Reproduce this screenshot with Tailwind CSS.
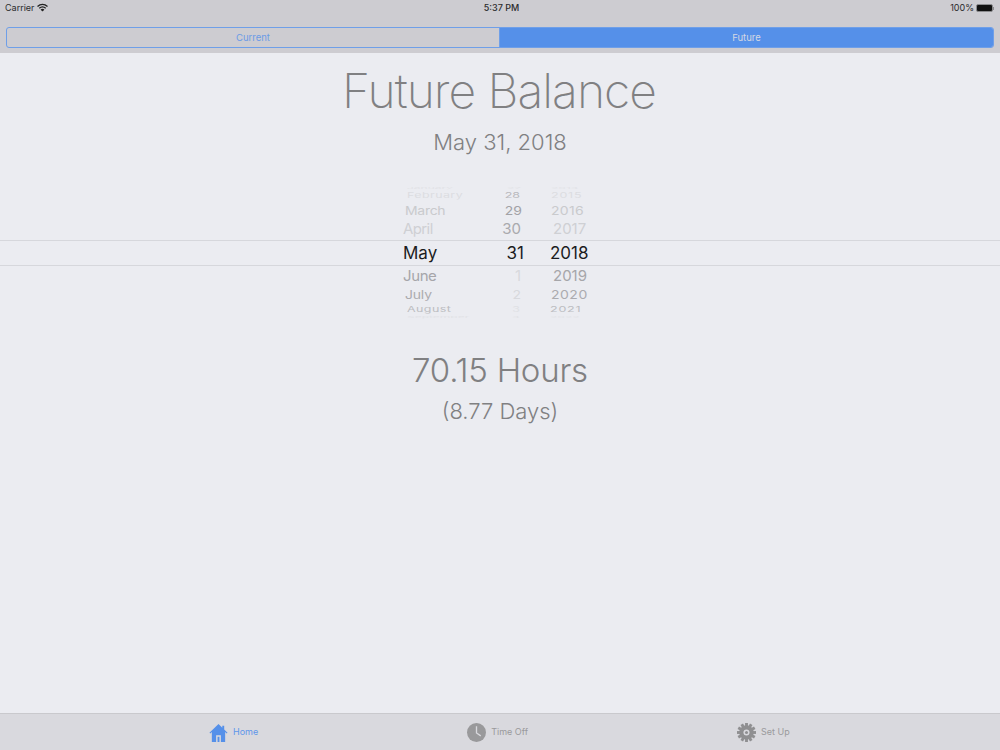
<!DOCTYPE html>
<html lang="en">
<head>
<meta charset="utf-8">
<title>Future Balance</title>
<script src="https://cdn.jsdelivr.net/npm/@tailwindcss/browser@4"></script>
</head>
<body class="font-['Inter',sans-serif]">
<div class="flex h-[750px] w-[1000px] flex-col overflow-hidden bg-[#ebecf1]">

  <!-- Status bar + segmented control -->
  <header class="h-[53px] shrink-0 bg-[#cdccd1]">
    <div class="relative flex h-[20px] items-start justify-between pl-[5px] pr-[6px] pt-[2px] text-[9px] leading-[12px] text-[#2b2b2d]">
      <div class="flex items-center gap-[2px]">
        <span>Carrier</span>
        <svg class="-mt-[2px] h-[9px] w-[11px]" viewBox="0 0 22 16" fill="none" stroke="#222" stroke-width="2.6"><path d="M1 6c6-5.500 14-5.500 20 0"/><path d="M4.500 9.500c4-3.500 9-3.500 13 0"/><path d="M8 13c2-1.600 4-1.600 6 0"/><path d="M11 16l-2.500-3h5z" fill="#222" stroke="none"/></svg>
      </div>
      <span class="absolute left-0 right-0 pl-[3px] text-center font-medium">5:37 PM</span>
      <div class="flex items-center gap-[2px]">
        <span>100%</span>
        <div class="flex items-center">
          <div class="h-[8px] w-[17px] rounded-[2px] border border-[#8b8b8e] bg-[#111]"></div>
          <div class="h-[3px] w-[1px] bg-[#8b8b8e]"></div>
        </div>
      </div>
    </div>
    <div class="mx-[6px] mt-[7px] flex h-[21px] overflow-hidden rounded-[3px] border border-[#6f9fe8] text-[9.5px] leading-[19px]">
      <div class="w-[493px] border-r border-[#6f9fe8] text-center text-[#6b9be6]">Current</div>
      <div class="flex-1 bg-[#5590e9] text-center text-[#d4d8e4]">Future</div>
    </div>
  </header>

  <main class="flex-1 text-center text-[#808082]">
    <h1 class="mt-[9px] pr-[2px] text-[48px] font-extralight leading-[58px] tracking-[-1px]">Future Balance</h1>
    <p class="mt-[6px] text-[22px] font-[350] leading-[32px]">May 31, 2018</p>

    <!-- Date picker wheel -->
    <div class="mt-[29px] text-left">
      <div class="flex h-[2px] scale-y-[.16] items-center pl-[407px] text-[12px] leading-[12px] text-[#e2e3e7]"><span class="w-[93px]">January</span><span class="w-[21px] text-right">27</span><span class="ml-[30px]">2014</span></div>
      <div class="flex h-[14px] scale-y-[.62] items-center pl-[407px] text-[12.5px] leading-[14px] text-[#dcdde1]"><span class="w-[93px] tracking-[.4px]">February</span><span class="w-[21px] pr-[1px] text-right text-[#b9b9bd]">28</span><span class="ml-[30px] tracking-[.8px]">2015</span></div>
      <div class="flex h-[15px] scale-y-[.8] items-center pl-[405px] text-[14px] leading-[16px] text-[#c9cacd]"><span class="w-[95px] tracking-[-.3px]">March</span><span class="w-[22px] text-right text-[#a2a2a6]">29</span><span class="ml-[29px] tracking-[.3px]">2016</span></div>
      <div class="flex h-[22px] scale-y-[.95] items-center pl-[403px] text-[15px] leading-[20px] text-[#cfd0d4]"><span class="w-[97px] tracking-[-.6px]">April</span><span class="w-[21px] text-right text-[#a9a9ad]">30</span><span class="ml-[32px]">2017</span></div>
      <div class="flex h-[26px] items-center border-y border-[#d6d7dc] pl-[403px] text-[17px] leading-[24px] text-[#1c1c1e]"><span class="w-[96px]">May</span><span class="w-[25px] text-right">31</span><span class="ml-[26px]">2018</span></div>
      <div class="flex h-[20px] scale-y-[.95] items-center pl-[403px] text-[15px] leading-[20px] text-[#a6a6aa]"><span class="w-[97px] tracking-[-.4px]">June</span><span class="w-[21px] text-right text-[#d8d9dd]">1</span><span class="ml-[32px]">2019</span></div>
      <div class="flex h-[18px] scale-y-[.8] items-center pl-[405px] text-[14px] leading-[16px] text-[#ababaf]"><span class="w-[95px] tracking-[-.2px]">July</span><span class="w-[21px] text-right text-[#d8d9dd]">2</span><span class="ml-[30px] tracking-[.5px]">2020</span></div>
      <div class="flex h-[12px] scale-y-[.62] items-center pl-[407px] text-[12.5px] leading-[14px] text-[#bcbdc1]"><span class="w-[93px] tracking-[.4px]">August</span><span class="w-[20px] text-right text-[#e0e1e5]">3</span><span class="ml-[30px] tracking-[.8px]">2021</span></div>
      <div class="flex h-[2px] scale-y-[.16] items-center pl-[407px] text-[12px] leading-[12px] text-[#e2e3e7]"><span class="w-[93px]">September</span><span class="w-[20px] text-right">4</span><span class="ml-[30px]">2022</span></div>
    </div>

    <p class="mt-[30px] text-[33px] font-light leading-[44px] tracking-[-0.2px]">70.15 Hours</p>
    <p class="mt-[4px] text-[22px] font-light leading-[30px]">(8.77 Days)</p>
  </main>

  <!-- Tab bar -->
  <nav class="flex h-[37px] shrink-0 items-center border-t border-[#c9c9cd] bg-[#d9d9de] text-[9px] text-[#9a9a9c]">
    <div class="ml-[209px] flex items-center gap-[5px] text-[#5f96ea]">
      <svg class="h-[19px] w-[19px]" viewBox="0 0 20 20"><path d="M10 1L0.500 10.200 1.300 11 3 9.500V20h14V9.500L18.700 11l.8-.8L16 6.800V3h-2v1.900z" fill="#5590e9"/><path d="M7.500 20v-7h5v7h-1.500v-5.500h-2V20z" fill="#d9d9de"/></svg>
      <span>Home</span>
    </div>
    <div class="ml-[209px] flex items-center gap-[5px]">
      <svg class="h-[19px] w-[19px]" viewBox="0 0 20 20"><circle cx="10" cy="10" r="10" fill="#99999b"/><path d="M10 3.500V10.500L14.500 13.500" fill="none" stroke="#d9d9de" stroke-width="1.400"/></svg>
      <span>Time Off</span>
    </div>
    <div class="ml-[209px] flex items-center gap-[5px]">
      <svg class="h-[19px] w-[19px]" viewBox="0 0 20 20"><g fill="#8f8f91"><circle cx="10" cy="10" r="7.600"/><rect x="8.500" y="0" width="3" height="20"/><rect x="8.500" y="0" width="3" height="20" transform="rotate(30 10 10)"/><rect x="8.500" y="0" width="3" height="20" transform="rotate(60 10 10)"/><rect x="8.500" y="0" width="3" height="20" transform="rotate(90 10 10)"/><rect x="8.500" y="0" width="3" height="20" transform="rotate(120 10 10)"/><rect x="8.500" y="0" width="3" height="20" transform="rotate(150 10 10)"/></g><circle cx="10" cy="10" r="3.200" fill="#d9d9de"/><circle cx="10" cy="10" r="1.600" fill="#8f8f91"/></svg>
      <span>Set Up</span>
    </div>
  </nav>
</div>
</body>
</html>
